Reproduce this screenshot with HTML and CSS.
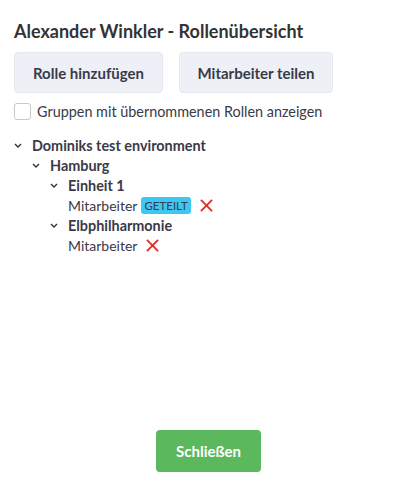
FILE: index.html
```html
<!DOCTYPE html>
<html lang="de">
<head>
    <meta charset="UTF-8">
    <meta name="viewport" content="width=device-width, initial-scale=1.0">
    <title>Rollenübersicht</title>
    <link rel="stylesheet" href="styles.css">
</head>
<body>
    <div class="modal">
        <h2 class="title">Alexander Winkler - Rollenübersicht</h2>
        <div class="actions">
            <button class="btn-light btn-add">Rolle hinzufügen</button>
            <button class="btn-light btn-share">Mitarbeiter teilen</button>
        </div>
        <label class="check-row">
            <span class="checkbox"></span>
            Gruppen mit übernommenen Rollen anzeigen
        </label>

        <ul class="tree">
            <li>
                <div class="node"><svg class="chev" viewBox="0 0 8 5"><polyline points="1,1 4,4 7,1"/></svg>Dominiks test environment</div>
                <ul>
                    <li>
                        <div class="node"><svg class="chev" viewBox="0 0 8 5"><polyline points="1,1 4,4 7,1"/></svg>Hamburg</div>
                        <ul>
                            <li>
                                <div class="node"><svg class="chev" viewBox="0 0 8 5"><polyline points="1,1 4,4 7,1"/></svg>Einheit 1</div>
                                <div class="role">Mitarbeiter <span class="badge">GETEILT</span>
                                    <svg class="remove" viewBox="0 0 14 14"><path d="M1 1 L13 13 M13 1 L1 13"/></svg>
                                </div>
                            </li>
                            <li>
                                <div class="node"><svg class="chev" viewBox="0 0 8 5"><polyline points="1,1 4,4 7,1"/></svg>Elbphilharmonie</div>
                                <div class="role">Mitarbeiter
                                    <svg class="remove" viewBox="0 0 14 14"><path d="M1 1 L13 13 M13 1 L1 13"/></svg>
                                </div>
                            </li>
                        </ul>
                    </li>
                </ul>
            </li>
        </ul>

        <div class="footer">
            <button class="btn-close">Schließen</button>
        </div>
    </div>
</body>
</html>
```

FILE: styles.css
```css
body {
    margin: 0;
    font-family: Lato, "Liberation Sans", sans-serif;
    color: #3a3a48;
    background: white;
}
.modal {
    height: 487px;
    box-sizing: border-box;
    padding: 21px 14px 15px 14px;
    display: flex;
    flex-direction: column;
}
.title {
    margin: 0 0 11px 0;
    font-size: 18px;
    font-weight: bold;
    color: #333;
    line-height: 20px;
}
.actions {
    display: flex;
    gap: 16px;
}
.btn-light {
    height: 41px;
    background: #eef0f8;
    border: 1px solid #e6e8f0;
    border-radius: 4px;
    font-family: inherit;
    font-size: 15px;
    font-weight: bold;
    color: #3a3a48;
}
.btn-add {
    width: 149px;
}
.btn-share {
    width: 154px;
}
.check-row {
    display: flex;
    align-items: center;
    gap: 6px;
    margin-top: 10px;
    font-size: 14.4px;
    line-height: 17px;
}
.checkbox {
    width: 15px;
    height: 15px;
    border: 1px solid #c8c8c8;
    border-radius: 3px;
    background: white;
}
.tree, .tree ul {
    list-style: none;
    margin: 0;
    padding: 0;
}
.tree {
    margin-top: 15px;
}
.tree ul {
    padding-left: 18px;
}
.node {
    display: flex;
    align-items: center;
    height: 20px;
    font-size: 14.4px;
    font-weight: bold;
}
.chev {
    width: 8px;
    height: 5px;
    margin: 0 10px 0 0;
    fill: none;
    stroke: #333;
    stroke-width: 1.4;
}
.role {
    display: flex;
    align-items: center;
    height: 20px;
    padding-left: 18px;
    font-size: 14px;
}
.badge {
    margin-left: 4px;
    background: #3dc8f2;
    color: #3a3a48;
    font-size: 11.5px;
    line-height: 15px;
    padding: 1px 3px;
    border-radius: 3px;
}
.remove {
    width: 13px;
    height: 13px;
    margin-left: 9px;
    fill: none;
    stroke: #d9302c;
    stroke-width: 2;
}
.footer {
    margin-top: auto;
    display: flex;
    justify-content: center;
}
.btn-close {
    width: 105px;
    height: 42px;
    background: #5cb85c;
    border: none;
    border-radius: 4px;
    color: white;
    font-family: inherit;
    font-size: 15px;
    font-weight: bold;
}
```
